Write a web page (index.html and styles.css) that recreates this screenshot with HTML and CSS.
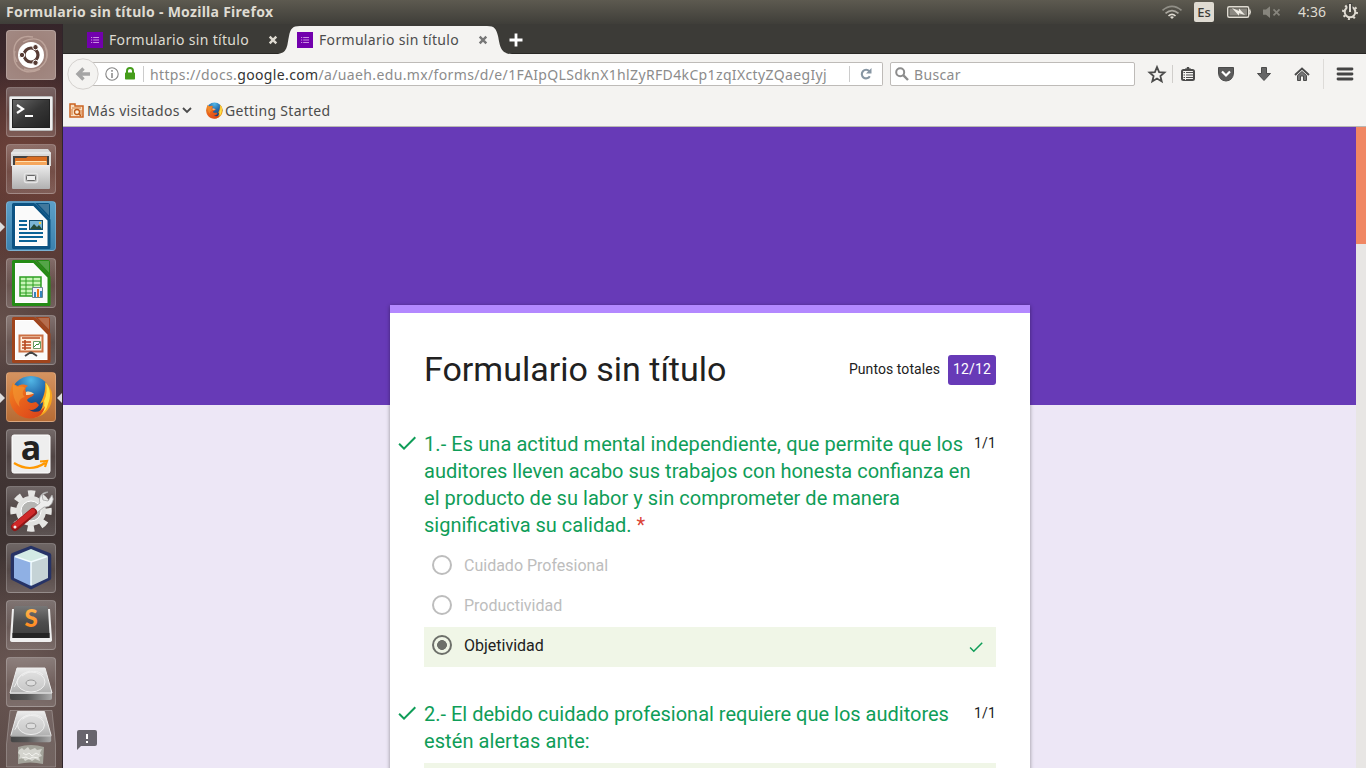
FILE: index.html
```html
<!DOCTYPE html>
<html lang="es">
<head>
<meta charset="utf-8">
<title>Formulario sin título</title>
<link rel="stylesheet" href="styles.css">
</head>
<body>
<svg width="0" height="0" class="defs" aria-hidden="true">
  <defs>
    <linearGradient id="steel" x1="0" y1="0" x2="0" y2="1"><stop offset="0" stop-color="#ececec"/><stop offset="1" stop-color="#b0b0b0"/></linearGradient>
    <linearGradient id="edge"><stop offset="0" stop-color="#444"/><stop offset=".4" stop-color="#555"/><stop offset="1" stop-color="#aaa"/></linearGradient>
    <linearGradient id="dark" x1="0" y1="0" x2="1" y2="1"><stop offset="0" stop-color="#666"/><stop offset=".5" stop-color="#363636"/><stop offset="1" stop-color="#222"/></linearGradient>
    <linearGradient id="keycap" x1="0" y1="0" x2="0" y2="1"><stop offset="0" stop-color="#777"/><stop offset=".5" stop-color="#4d4d4d"/><stop offset="1" stop-color="#3c3c3c"/></linearGradient>
    <linearGradient id="sun" x1="0" y1="0" x2="0" y2="1"><stop offset="0" stop-color="#ffc35a"/><stop offset="1" stop-color="#ff7d14"/></linearGradient>
    <radialGradient id="globe" cx=".5" cy=".1" r=".8"><stop offset="0" stop-color="#52b7e6"/><stop offset=".5" stop-color="#2268ab"/><stop offset="1" stop-color="#15376f"/></radialGradient>
    <linearGradient id="fox" x1="0" y1="0" x2="1" y2="1"><stop offset="0" stop-color="#f28a22"/><stop offset=".45" stop-color="#e8601c"/><stop offset="1" stop-color="#d8401b"/></linearGradient>
    <symbol id="firefox" viewBox="0 0 44 44">
      <circle cx="22" cy="21.500" r="20.500" fill="url(#globe)"/>
      <path d="M36 7C41 11 44 17 43 24C42 35 33 43 22 43C30 39 34 34 34 27L31 29C34 23 37 17 36 7Z" fill="#f7a31c"/>
      <path d="M37 8C42 14 42 22 39 29C38 34 35 37 32 39C35 33 36 29 35 26C38 20 38 14 37 8Z" fill="#fde34b"/>
      <path d="M4 7C5 10 7 10 9 11C12 9 16 9 19 11C16 12 16 15 17 17L25 19C24 22 20 22 18 25C20 29 24 28 27 27L30 30C27 35 22 36 19 34C26 39 32 37 36 31C35 38 30 43.500 21 43.500C9 43 .5 34 .5 22C.5 15 3 12 4 7Z" fill="url(#fox)"/>
      <path d="M4 8C5 11 7 11 9 12C13 11 15 12 16 13C13 16 13 20 16 22C10 23 9 28 11 32C5 27 3 18 4 8Z" fill="#f49a32" opacity=".6"/>
      <path d="M17 17C20 16 22 17 25 18.500C22 20 19 20 17 20Z" fill="#f5d6aa"/>
    </symbol>
    <symbol id="form" viewBox="0 0 16 16"><path fill="#7200ad" d="M0 0h16v16H0z"/><path stroke="#c98fe0" d="M4 5.500h1.200M4 8h1.200M4 10.500h1.200M6.200 5.500H12M6.200 8H12M6.200 10.500H12" fill="none"/></symbol>
    <symbol id="close" viewBox="0 0 10 10"><path d="M1.700 1.700 8.300 8.300M8.300 1.700 1.700 8.300" fill="none" stroke="currentColor" stroke-width="2.400"/></symbol>
    <symbol id="check" viewBox="0 0 24 24"><path d="M9 16.170 4.830 12l-1.420 1.410L9 19 21 7l-1.410-1.410z" fill="#0f9d58"/></symbol>
    <symbol id="doc" viewBox="0 0 50 50"><path d="M7.500 3.500H28L43 19V46.500H7.500Z" fill="#fff" stroke="currentColor" stroke-width="3" stroke-linejoin="round"/><path d="M10 6H27L40.500 20V44H10Z" fill="#fafafa"/><path d="M29 2H42Q44 2 44 4V18Z" fill="currentColor"/><path d="M32 3H43V14.500Z" fill="#fff" opacity=".22"/></symbol>
    <symbol id="disk" viewBox="0 0 50 50"><path d="M11 11H39L46 36H4Z" fill="url(#steel)" stroke="#eee"/><path d="M4 36H46V41Q46 43 44 43H6Q4 43 4 41Z" fill="url(#edge)"/><path d="M4 36.500H46" stroke="#ccc"/><ellipse cx="25" cy="25" rx="14" ry="10" fill="#dcdcdc" fill-opacity=".5" stroke="#eee"/><path d="M16 19C24 13 32 13 37 18M24 14C11 17 12 25 8 30" fill="none" stroke="#efefef"/><ellipse cx="25" cy="26" rx="5" ry="3" fill="#ddd" stroke="#999"/></symbol>
  </defs>
</svg>

<header class="panel">
  <span class="panel-title">Formulario sin título - Mozilla Firefox</span>
  <svg class="tray" width="200" height="24" viewBox="1160 0 200 24">
    <g fill="none" stroke-width="1.700"><path d="M1162.500 10.300Q1172 2.300 1181.500 10.300" stroke="#918f87"/><path d="M1165.500 13.300Q1172 7.800 1178.500 13.300" stroke="#aaa79f"/><path d="M1168.500 16Q1172 12.700 1175.500 16" stroke="#dfdbd2"/></g><path d="M1170 17Q1172 15.500 1174 17L1172 19Z" fill="#dfdbd2"/>
    <rect x="1194" y="2" width="20" height="20" rx="2" fill="#dfdbd2"/>
    <text x="1204" y="17" text-anchor="middle" class="lang">Es</text>
    <rect x="1227.700" y="6.700" width="21" height="10.600" rx="1.500" fill="none" stroke="#dfdbd2" stroke-width="1.400"/><path d="M1229.500 8.500H1247V15.500H1229.500Z" fill="#8b8881"/><path d="M1249.500 9.500Q1251 12 1249.500 14.500" stroke="#dfdbd2" fill="none" stroke-width="1.500"/><path d="M1232 8 1239 11V8.500L1245 15 1239 13.200V15.800Z" fill="#f0ede5"/>
    <path d="M1263 9.500H1266L1270 6.300V18L1266 14.800H1263Z" fill="#87857d"/><path d="M1273.500 9.300 1279.500 15.300M1279.500 9.300 1273.500 15.300" stroke="#87857d" stroke-width="1.700"/>
    <text x="1298" y="17" class="clock" textLength="28">4:36</text>
    <g fill="none" stroke="#dfdbd2"><circle cx="1350" cy="12" r="5.300" stroke-width="2"/><circle cx="1350" cy="12" r="7" stroke-width="2" stroke-dasharray="2 3.500"/><path d="M1350 3V11" stroke="#454440" stroke-width="5"/><path d="M1350 4V12" stroke-width="2"/></g>
  </svg>
</header>

<div class="desktop">
  <nav class="launcher">
    <div class="tile dash"><svg viewBox="0 0 50 50"><g fill="none" stroke="#cdb5ab" opacity=".65" stroke-width="1.400"><path d="M11 32C3 16 12 4 27 7"/><path d="M17 12C34 3 44 16 40 30"/><path d="M39 17C46 32 32 44 18 39"/><path d="M34 39C18 47 5 36 9 21"/></g><circle cx="25" cy="25" r="13" fill="#fff"/><circle cx="25" cy="25" r="7" fill="none" stroke="#563b34" stroke-width="3.200"/><g fill="#563b34" stroke="#fff"><circle cx="16" cy="25" r="2.700"/><circle cx="29.500" cy="17.200" r="2.700"/><circle cx="29.500" cy="32.800" r="2.700"/></g></svg></div>
    <div class="tile"><svg viewBox="0 0 50 50"><rect x="3.500" y="9.500" width="43" height="34" rx="1" fill="#eee" stroke="#bbb"/><rect x="6.500" y="12.500" width="37" height="28" fill="url(#dark)" stroke="#222"/><path d="m11 18 6 4-6 4M19 29h8" fill="none" stroke="#fff" stroke-width="2.200"/></svg></div>
    <div class="tile"><svg viewBox="0 0 50 50"><path d="M8 5H42L45 9V22H5V9Z" fill="#d9d9d9"/><path d="M5 9H45" stroke="#f2f2f2"/><path d="M7 12H43V22H7Z" fill="#424242"/><path d="M9 14H20L22 12.500H41V23H9Z" fill="#d96d21"/><path d="M9 17H41V23H9Z" fill="#f5a65b"/><path d="M10 17.500H40" stroke="#ffe0b0"/><path d="M6 21H44V44Q44 45 43 45H7Q6 45 6 44Z" fill="url(#steel)"/><path d="M6 21.500H44" stroke="#eee"/><rect x="18.500" y="29.500" width="13" height="9" rx="2" fill="#bbb" stroke="#e4e4e4" stroke-width="1.500"/><rect x="20.500" y="31.500" width="9" height="5" rx="1" fill="#eee" stroke="#666"/></svg></div>
    <div class="tile blue"><i class="arrow left"></i><svg viewBox="0 0 50 50" color="#0c5282"><use href="#doc"/><g stroke="#0b6397" stroke-width="2"><path d="M13 20H21M13 24H21M13 28H21M13 32H37M13 36H37M13 40H31"/></g><rect x="23.500" y="19.500" width="13" height="9" fill="#7ab4d6" stroke="#154c6d"/><path d="m24 28 4-5 3 3 2-2 3 4Z" fill="#264a38"/><circle cx="34" cy="22" r="1.200" fill="#ffcb38"/></svg></div>
    <div class="tile"><svg viewBox="0 0 50 50" color="#248b15"><use href="#doc"/><path d="M14 19H35V38H14Z" fill="#c8f5b7" stroke="#2c9f22" stroke-width="1.500"/><path d="M14 23H35M14 27H35M14 31H35M14 35H35M20 19V38M27 19V38" stroke="#2c9f22"/><path d="M26.500 29.500H36.500V39.500H26.500Z" fill="#eef" stroke="#68838d"/><path d="M28 34H30V39H28Z" fill="#3484bd"/><path d="M31 31H33V39H31Z" fill="#ec7b18"/><path d="M34 33H36V39H34Z" fill="#3484bd"/></svg></div>
    <div class="tile"><svg viewBox="0 0 50 50" color="#a0441c"><use href="#doc"/><path d="M13.500 20.500H36.500V36.500H13.500Z" fill="#fff0de" stroke="#cc7043" stroke-width="2"/><path d="M16 23H34M16 27H25M16 30H25M16 33H25M19 25V35" stroke="#b94a20" stroke-width="1.600"/><path d="M27.500 26.500H34.500V33.500H27.500Z" fill="#fff" stroke="#689a65"/><path d="m28 32 3-3 1 1 2-3" fill="none" stroke="#318f32"/><path d="M25 37V39M25 37 19 41M25 37 31 41" stroke="#444" stroke-width="2"/></svg></div>
    <div class="tile orange"><i class="arrow left"></i><i class="arrow right"></i><svg viewBox="0 0 50 50"><use href="#firefox" x="3" y="3" width="44" height="44"/></svg></div>
    <div class="tile"><svg viewBox="0 0 50 50"><rect x="6" y="6" width="38" height="38" rx="2" fill="#eee" stroke="#fff"/><text x="25" y="31" text-anchor="middle" class="amazon">a</text><path d="M8 34Q24 44 39 34M34 32.500 41 32 39 38" fill="none" stroke="#ff9800" stroke-width="2.200"/></svg></div>
    <div class="tile"><svg viewBox="0 0 50 50"><circle cx="25" cy="25" r="15" fill="#e1e1df"/><circle cx="25" cy="25" r="17.500" fill="none" stroke="#e6e6e4" stroke-width="6.500" stroke-dasharray="6.870 6.870" stroke-dashoffset="3.400"/><circle cx="25" cy="25" r="10" fill="#b5b5b3" stroke="#fff"/><path d="M42 6A8 8 0 0 0 34 17L24 25 28 29 38 21A8 8 0 0 0 46 9L42 15 37 14 36 9Z" fill="#ededed" stroke="#a5a5a5" stroke-width=".8"/><path d="M27 26 9 41" stroke="#8f1717" stroke-width="8" stroke-linecap="round"/><path d="M26.500 25.500 9 40" stroke="#cf2929" stroke-width="5.500" stroke-linecap="round"/><circle cx="9" cy="41" r="1.500" fill="#eee"/></svg></div>
    <div class="tile"><svg viewBox="0 0 50 50"><path d="M25 5 43 12V35L25 44 7 35V12Z" fill="#b5cad5" stroke="#263366" stroke-width="4.500" stroke-linejoin="round"/><path d="M8 13 25 19V43L8 35Z" fill="#8fb0e4"/><path d="M25 19 42 13V35L25 43Z" fill="#c5d3d6"/><path d="M8 13 25 6 42 13 25 19Z" fill="#d3ebe5"/><path d="M9 13.500 25 19 41 13.500M25 19V42" fill="none" stroke="#f2fdff" stroke-width="1.500"/></svg></div>
    <div class="tile"><svg viewBox="0 0 50 50"><path d="M6 9 4 40Q4 42 7 42H43Q46 42 46 40L44 9Z" fill="#efefef"/><path d="M10 6H40Q42 6 42 9L43.500 34V38H6.500V34L8 9Q8 6 10 6Z" fill="url(#keycap)"/><path d="M6.500 33H43.500V38H6.500Z" fill="#242424"/><text x="25" y="27" text-anchor="middle" class="sublime">S</text></svg></div>
    <div class="tile"><svg viewBox="0 0 50 50"><use href="#disk" width="50" height="50"/></svg></div>
    <div class="folded"><svg viewBox="0 0 50 58"><path d="M4 .5H46L49.500 34 49.500 57H.5V34Z" fill="#fff" fill-opacity=".13" stroke="#fff" stroke-opacity=".25"/><path d="M12 37Q25 33 38 37L37 54Q24 51 12 54Z" fill="#a4a49b"/><path d="m13 40 3-2 2 2 4-3 2 3 5-2 2 2 5-1-2 4 2 3-3 1 1 4-5-2-3 2-3-2-4 2-2-3-4 1 1-4-2-2Z" fill="#d4d4ce"/><path d="m17 43 3 2 3-2 3 3 4-3 3 2M16 48l4-1 3 2 4-2 5 1" fill="none" stroke="#f2f2ee"/><use href="#disk" x="1" y="-9" width="48" height="48"/></svg></div>
  </nav>

  <main class="browser">
    <div class="tabs">
      <div class="tab"><svg class="fav"><use href="#form"/></svg><span class="ui tab-label">Formulario sin título</span><svg class="close"><use href="#close"/></svg></div>
      <div class="tab active">
        <svg class="tab-shape" viewBox="0 0 236 28"><path d="M0 28C12 28 11 19 13 10C14.500 3 16 0 24 0H211C219 0 220 3 222 10C224 19 224 28 236 28Z" fill="#f4f3f1"/></svg>
        <svg class="fav"><use href="#form"/></svg><span class="ui tab-label">Formulario sin título</span><svg class="close"><use href="#close"/></svg>
      </div>
      <svg class="plus" viewBox="0 0 14 14"><path d="M7 .5V13.500M.5 7H13.500" stroke="#fff" stroke-width="2.800"/></svg>
    </div>

    <div class="toolbar">
      <div class="back"><svg viewBox="0 0 32 32"><circle cx="16" cy="16" r="15.200" fill="#f4f3f1" stroke="#d4d1ce"/><path d="M23 16H12M16.500 10.500 11 16 16.500 21.500" fill="none" stroke="#a5a5a5" stroke-width="3.400"/></svg></div>
      <div class="url">
        <svg class="info" viewBox="0 0 14 14"><circle cx="7" cy="7" r="6.200" fill="#fff" stroke="#858585" stroke-width="1.100"/><path d="M7 6V11M7 3V4.700" stroke="#858585" stroke-width="1.500"/></svg>
        <svg class="lock" viewBox="0 0 10 13"><path d="M2 6V4a3 3 0 0 1 6 0V6" fill="none" stroke="#459d1b" stroke-width="2"/><rect y="5.500" width="10" height="7" rx=".7" fill="#459d1b"/></svg>
        <i class="divider"></i>
        <span class="ui address">https://docs.<b>google.com</b>/a/uaeh.edu.mx/forms/d/e/1FAIpQLSdknX1hlZyRFD4kCp1zqIXctyZQaegIyj</span>
        <i class="divider"></i>
        <svg class="reload" viewBox="0 0 12 12"><path d="M9.800 8.300A4.300 4.300 0 1 1 9.300 3.200" fill="none" stroke="#8796a3" stroke-width="2.100"/><path d="M11.500 0V5.500H6Z" fill="#8796a3"/></svg>
      </div>
      <div class="search"><svg viewBox="0 0 14 14"><circle cx="5.200" cy="5.200" r="4" fill="none" stroke="#8c8c8c" stroke-width="2"/><path d="m8.200 8.200 4.800 4.800" stroke="#8c8c8c" stroke-width="2.400"/></svg><span class="ui">Buscar</span></div>
      <svg class="actions" viewBox="1141 59 225 30" fill="none" stroke="#4b4b4b">
        <path d="m1157 67 2.100 5.100 5.400.4-4.100 3.600 1.300 5.300-4.700-2.900-4.700 2.900 1.300-5.300-4.100-3.600 5.400-.4Z" stroke-width="1.800"/>
        <path d="M1172.500 65V83" stroke="#d0cecb"/>
        <rect x="1182" y="70" width="12" height="10" rx="1.500" stroke-width="2"/><path d="M1185 70V68.500H1186.500L1187 67H1189L1189.500 68.500H1191V70Z" fill="#4b4b4b" stroke="none"/><path d="M1183.500 72.500H1193M1183.500 75H1193M1183.500 77.500H1193" stroke-width="1"/><path d="M1185.500 71V80" stroke-width="1" stroke="#f4f3f1"/>
        <path d="M1218.500 67.500H1233.500V73Q1233 80.500 1226 81Q1219 80.500 1218.500 73Z" fill="#5b5b5b"/><path d="m1222 71.500 4 4 4-4" stroke="#fff" stroke-width="2.200"/>
        <path d="M1261.500 67.500H1266.500V73.500H1270.500L1264 80.500 1257.500 73.500H1261.500Z" fill="#666"/>
        <path d="m1295 75 7-6.500 7 6.500" stroke-width="2"/><path d="M1297.500 75.500 1302 71.500 1306.500 75.500V80.500H1303.500V76H1300.500V80.500H1297.500Z" fill="#777"/>
        <path d="M1323.500 59V89" stroke="#dddbd8"/><path d="M1338 69H1352M1338 74H1352M1338 79H1352" stroke="#444" stroke-width="2.800" stroke-linecap="round"/>
      </svg>
    </div>

    <div class="bookmarks">
      <svg class="folder" viewBox="0 0 15 15"><path d="M1 14V1H6V3H14V14Z" fill="#f9dfc3" stroke="#ca6320" stroke-width="1.500"/><path d="M3 5H12M3 12V6M12 12V7" stroke="#d17937"/><circle cx="8" cy="9" r="2.500" fill="#fff1df" stroke="#bd5b19" stroke-width="1.300"/><path d="m9.500 10.500 2.500 2.500" stroke="#bd5b19" stroke-width="1.500"/></svg>
      <span class="ui visited">Más visitados</span>
      <svg class="chevron" viewBox="0 0 10 7"><path d="m1 1 4 4 4-4" fill="none" stroke="#4b4b4b" stroke-width="1.800"/></svg>
      <svg class="small-fox"><use href="#firefox"/></svg>
      <span class="ui started">Getting Started</span>
    </div>

    <div class="viewport">
      <div class="page">
        <article class="card">
          <div class="heading"><h1>Formulario sin título</h1><span class="total">Puntos totales</span><span class="score">12/12</span></div>
          <section class="question">
            <svg class="mark"><use href="#check"/></svg>
            <div class="prompt"><h2><span class="wide">1.- Es una actitud mental independiente, que permite que los</span><br>auditores lleven acabo sus trabajos con honesta confianza en<br><span class="mid">el producto de su labor y sin comprometer de manera</span><br>significativa su calidad. <em>*</em></h2><span class="points">1/1</span></div>
            <div class="option"><i class="radio"></i>Cuidado Profesional</div>
            <div class="option"><i class="radio"></i>Productividad</div>
            <div class="option chosen"><i class="radio"></i>Objetividad<svg class="ok"><use href="#check"/></svg></div>
          </section>
          <section class="question">
            <svg class="mark"><use href="#check"/></svg>
            <div class="prompt"><h2>2.- El debido cuidado profesional requiere que los auditores<br><span class="wide">estén alertas ante:</span></h2><span class="points">1/1</span></div>
            <div class="option chosen"></div>
          </section>
        </article>
        <svg class="feedback" viewBox="0 0 20 20"><path d="M2 0H18Q20 0 20 2V14Q20 16 18 16H4L0 20V2Q0 0 2 0Z" fill="#68656d"/><path d="M10 4V9M10 11V13" stroke="#fff" stroke-width="2"/></svg>
      </div>
      <div class="scroll"><div class="thumb"></div></div>
    </div>
  </main>
</div>
</body>
</html>
```
FILE: styles.css
```css
* { box-sizing: border-box; }
html, body { margin: 0; width: 1366px; height: 768px; overflow: hidden; }
body { font-family: "Noto Sans", sans-serif; }
svg { display: block; flex-shrink: 0; }
.defs { position: absolute; }

.panel { height: 24px; display: flex; align-items: center; justify-content: space-between; padding: 0 6px; background: linear-gradient(#5d5a50, #3f3e39); color: #dfdbd2; }
.panel-title { font-size: 14px; font-weight: 700; line-height: 24px; white-space: nowrap; letter-spacing: .28px; }
.lang { font-size: 13px; fill: #3c3b37; font-weight: 500; }
.clock { font-size: 14px; fill: #dfdbd2; }

.desktop { display: flex; height: 744px; }
.launcher { width: 63px; padding: 6px 0 0 6px; display: flex; flex-direction: column; gap: 7px; overflow: hidden; flex-shrink: 0; border-right: 1px solid #30252b;
  background: radial-gradient(circle at 20px 130px, #6d4239, transparent 90px), radial-gradient(circle at 58px 160px, #673e37, transparent 60px), radial-gradient(circle at 0 300px, #65504b, transparent 80px), radial-gradient(circle at 20px 650px, #6b5854, transparent 120px), linear-gradient(#35252a, #523230 18%, #5e3c36 28%, #493a3a 45%, #3d3231 68%, #5a4946); }
.tile { position: relative; width: 50px; height: 50px; border-radius: 4px; flex-shrink: 0; border: 1px solid rgba(255,255,255,.2); background: linear-gradient(rgba(255,255,255,.25), rgba(255,255,255,.08) 55%, rgba(255,255,255,.16)); }
.tile svg { width: 50px; height: 50px; margin: -1px; overflow: visible; }
.dash { background: radial-gradient(#9b7d75, #a28983); }
.blue { background: linear-gradient(#5c9fc8, #3b81ad); }
.orange { background: linear-gradient(#d49360, #b66b34); }
.arrow { position: absolute; top: 20px; border: 5px solid transparent; }
.arrow.left { left: -7px; border-left-color: #ddd; border-right: 0; }
.arrow.right { right: -7px; border-right-color: #ddd; border-left: 0; }
.folded { height: 58px; width: 50px; margin-top: -4px; flex-shrink: 0; }
.folded svg { width: 50px; height: 58px; }
.amazon { font: 700 34px "Open Sans", sans-serif; fill: #222; }
.sublime { font: 900 24px Lato, sans-serif; fill: url(#sun); }

.browser { width: 1303px; display: flex; flex-direction: column; }
.ui { font-size: 14px; line-height: 20px; white-space: nowrap; letter-spacing: .32px; }
.tabs { height: 30px; background: #3c3b37; display: flex; align-items: flex-start; padding: 2px 0 0 24px; border-bottom: 1px solid #292825; }
.tab { position: relative; width: 210px; height: 28px; display: flex; align-items: center; color: #dfdbd2; }
.tab.active { color: #4c4c4c; }
.tab.active .close { color: #777; }
.tab-shape { position: absolute; left: -21px; top: 0; width: 236px; height: 28px; }
.fav { position: relative; width: 16px; height: 16px; }
.tab-label { position: relative; width: 142px; margin-left: 6px; }
.close { position: relative; width: 10px; height: 10px; margin-left: 17px; }
.plus { width: 14px; height: 14px; margin: 7px 0 0 2px; }

.toolbar { height: 40px; background: #f4f3f1; display: flex; align-items: center; }
.back { width: 32px; height: 32px; margin-left: 4px; position: relative; z-index: 1; flex-shrink: 0; }
.url { height: 24px; width: 793px; margin-left: -9px; padding-left: 15px; background: #fff; border: 1px solid #bebbb8; border-left: 0; border-radius: 0 2px 2px 0; display: flex; align-items: center; flex-shrink: 0; }
.info { width: 14px; height: 14px; }
.lock { width: 10px; height: 13px; margin: -1px 0 0 6px; }
.divider { width: 1px; height: 16px; background: #ccc; flex-shrink: 0; }
.lock + .divider { margin-left: 8px; }
.address { width: 705px; height: 22px; line-height: 23px; overflow: hidden; padding-left: 6px; color: #8c8c8c; letter-spacing: .36px; flex-shrink: 0; }
.address b { color: #333; font-weight: 400; }
.reload { width: 12px; height: 12px; margin-left: 10px; }
.search { width: 245px; height: 24px; margin-left: 7px; padding-left: 4px; background: #fff; border: 1px solid #bebbb8; border-radius: 2px; display: flex; align-items: center; color: #8c8c8c; flex-shrink: 0; }
.search svg { width: 14px; height: 14px; margin-right: 5px; }
.search span { padding-top: 1px; }
.actions { width: 225px; height: 30px; margin-left: 6px; }

.bookmarks { height: 33px; background: #f4f3f1; border-bottom: 1px solid #b9b7b3; display: flex; align-items: center; padding-left: 6px; color: #4c4c4c; }
.bookmarks .ui { padding-top: 1px; }
.folder { width: 15px; height: 15px; }
.visited { width: 93px; margin-left: 3px; }
.chevron { width: 10px; height: 7px; margin-left: 2px; }
.small-fox { width: 17px; height: 17px; margin-left: 14px; }
.started { margin-left: 2px; }

.viewport { height: 641px; display: flex; overflow: hidden; }
.page { position: relative; width: 1293px; height: 641px; padding: 178px 0 0 327px; overflow: hidden; background: linear-gradient(#673ab7 278px, #ede7f6 278px); }
.card { width: 640px; height: 600px; padding: 0 34px; background: #fff; border-top: 8px solid #b388ff; box-shadow: 0 1px 4px rgba(0,0,0,.4); font-family: Roboto, sans-serif; color: #212121; }
.heading { display: flex; align-items: center; height: 112px; }
h1 { margin: 0; font-size: 34px; font-weight: 400; line-height: 46px; flex: 1; white-space: nowrap; }
.total { font-size: 14px; margin-right: 8px; letter-spacing: .07px; }
.score { width: 48px; height: 30px; margin-top: 2px; border-radius: 3px; background: #673ab7; color: #fff; font-size: 14px; line-height: 28px; text-align: center; letter-spacing: .2px; }
.question { position: relative; margin-top: 5px; padding-bottom: 28px; }
.mark { position: absolute; width: 24px; height: 24px; left: -29px; top: 1px; }
.prompt { display: flex; justify-content: space-between; padding-top: 1px; margin-bottom: 8px; }
h2 { margin: 0; font-size: 20px; font-weight: 400; line-height: 27px; color: #0f9d58; white-space: nowrap; width: 550px; }
h2 em { color: #db4437; font-style: normal; }
.wide { letter-spacing: .075px; }
.mid { letter-spacing: .04px; }
.points { font-size: 14px; line-height: 24px; letter-spacing: .2px; }
.option { height: 40px; padding: 0 11px 4px 8px; display: flex; align-items: center; font-size: 16px; color: #bdbdbd; }
.radio { width: 20px; height: 20px; border: 2px solid #bdbdbd; border-radius: 50%; margin-right: 12px; }
.chosen { background: #f0f6e7; color: #212121; }
.chosen .radio { border-color: #6d706a; background: radial-gradient(circle, #6d706a 4.6px, transparent 5.2px); }
.ok { width: 18px; height: 18px; margin: 4px 0 0 auto; }
.feedback { position: absolute; left: 14px; top: 603px; width: 20px; height: 20px; }
.scroll { width: 10px; background: #e8e6e4; }
.thumb { height: 117px; background: #f08763; }
```
